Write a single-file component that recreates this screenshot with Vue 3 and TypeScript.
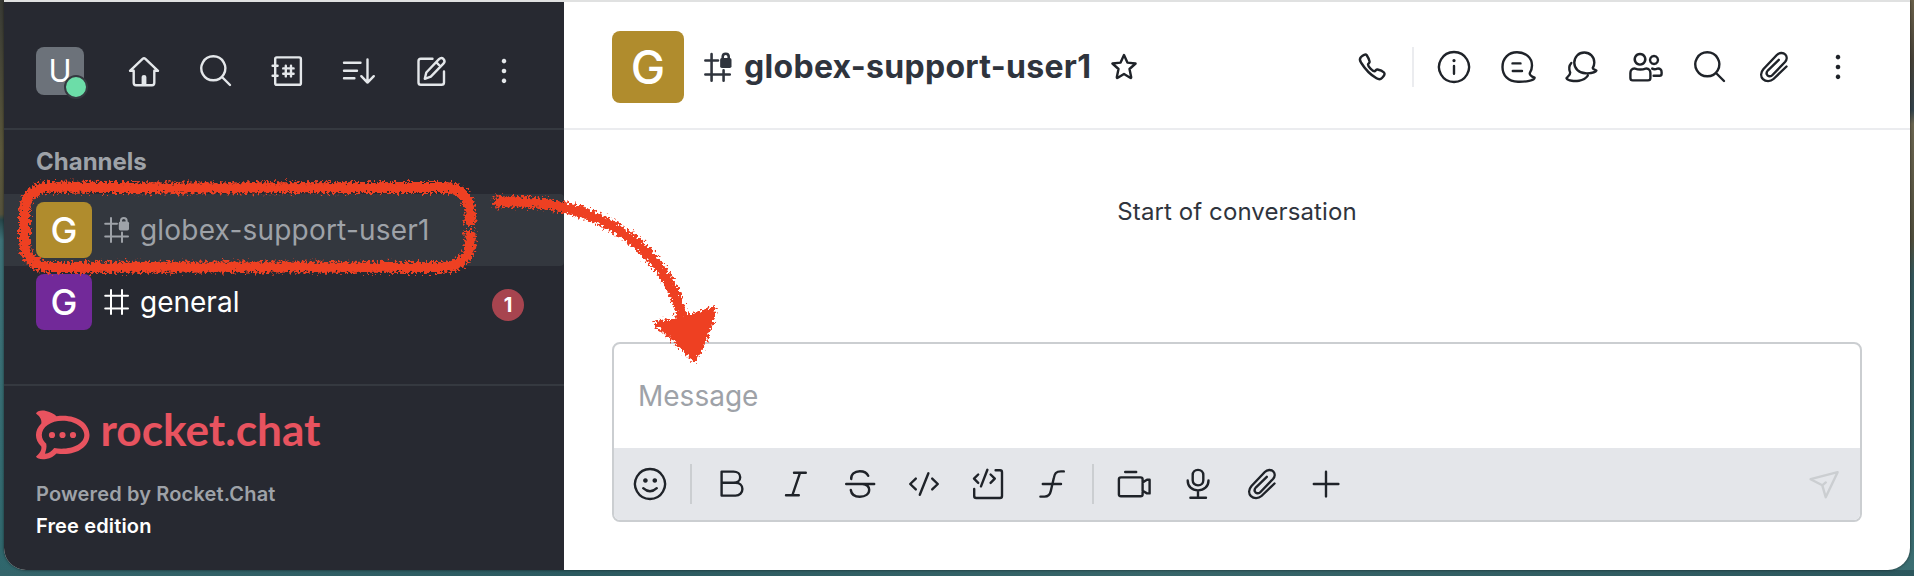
<script setup lang="ts">
interface IconShape {
  d: string
  fill?: string
}

const clip =
  'M32.5 19.5 L19.5 32 C16.3 35 11.6 34.7 9 32.2 C6.3 29.4 6.8 25.2 9.5 22 L22.8 8 C25.3 5.5 29.3 5.5 31.3 7.5 C33.3 9.7 33 12.8 31 15 L18.5 28 C17 29.6 14.8 29.6 13.5 28.3 C12.3 27 12.4 25 14 23.3 L24.8 12.8'
const search = 'M17.3 5.3 a12 12 0 1 0 .01 0Z M26 26 L34 34'
const dots =
  'M20 7.8 a2.3 2.3 0 1 0 .01 0Z M20 17.7 a2.3 2.3 0 1 0 .01 0Z M20 27.6 a2.3 2.3 0 1 0 .01 0Z'

const icons: Record<string, IconShape> = {
  home: {
    d: 'M18.6 7.8 Q20 6.6 21.4 7.8 L34 19.8 H30.3 V31.8 Q30.3 34.2 28 34.2 H12 Q9.7 34.2 9.7 31.8 V19.8 H6 Z',
    fill: 'M17.6 34 V26 Q17.6 24 20 24 Q22.4 24 22.4 26 V34Z',
  },
  search: { d: search },
  directory: {
    d: 'M8.7 6.4 H31.3 Q32.9 6.4 32.9 8 V32.2 Q32.9 33.8 31.3 33.8 H8.7 Q7.2 33.8 7.2 32.2 V8 Q7.2 6.4 8.7 6.4Z M4.6 14.8 H9.6 M4.6 24.8 H9.6 M15.2 17.4 H25.6 M15.2 22.8 H25.6 M17.8 14.8 V25.4 M23 14.8 V25.4',
  },
  sort: { d: 'M4 11.8 H20.5 M4 19.7 H17 M4 27.2 H14.4 M27.5 8.4 V31.5 M21.3 25.2 L27.5 31.6 L33.8 25.2' },
  edit: {
    d: 'M20.5 7.7 H8.8 Q6.5 7.7 6.5 10 V31.5 Q6.5 33.8 8.8 33.8 H29.5 Q32 33.8 32 31.5 V20.5 M12.8 27.8 L14.3 21.5 L27 8.2 C28.5 6.8 30.3 6.9 31.5 8 C32.7 9.3 32.8 11.2 31.4 12.7 L18.8 25.6 Z M24.2 11.2 L28.4 15.5',
  },
  menu: { d: '', fill: dots },
  phone: {
    d: 'M9 10 C11 8 13.6 6.8 14.6 8 C15.6 9.5 17.2 13 17.6 14.5 C18 16 16 16.5 16 17.6 C16 19.5 20.5 24.2 22.5 24.2 C23.6 24.2 24 22.2 25.5 22.5 C27 22.8 31 24.5 32 25.5 C33.2 26.8 32 29 30 31 C28.5 32.7 26.5 32.5 24.5 31.3 C18 27.5 13 22 9 15.5 C7.6 13.4 7.5 11.5 9 10Z',
  },
  info: {
    d: 'M20 5 a15 15 0 1 0 .01 0Z M20 19 V26.8',
    fill: 'M20 12 a1.6 1.6 0 1 0 .01 0Z',
  },
  thread: {
    d: 'M19 5.3 C27.5 5.3 34 10.5 34 18.5 C34 22 33 24 31.8 26 C31.4 28 34 29.6 36.6 30.7 C36.2 33.4 28 35 20 34.8 C10 34.5 4.5 28.5 4.5 20 C4.5 11 10.5 5.3 19 5.3Z M14.5 16.4 H22.5 M14.8 24 H24',
  },
  discussion: {
    d: 'M22.3 5.5 C28 5.5 32.3 9.8 32.3 15.5 C32.3 18 31.6 19.6 30.7 21.2 C30.6 22.2 33 22.8 34.4 23.6 C33.5 25.6 28 26.5 23.5 26.3 C17 26 12.3 21.5 12.3 15.7 C12.3 10 16.5 5.5 22.3 5.5Z M9.3 16 C6.6 19 6.8 22.2 8.2 25.6 C8.3 28 6 29 4.5 31.2 C6 34.1 13 34.4 17 33.7 C21 33 24 31.2 25.8 28.6',
  },
  members: {
    d: 'M14 7 a5.3 5.3 0 1 0 .01 0Z M28 9 a4 4 0 1 0 .01 0Z M9 21.6 Q14.3 23.4 19.6 21.6 C23 21.2 24.4 23.5 24.4 26 V31 Q24.4 33.4 22 33.4 H6.8 Q4.4 33.4 4.4 31 V26 C4.4 23.5 5.8 21.2 9 21.6Z M26.2 21.6 Q28.3 22.8 31.4 21.6 C34.2 21.3 35.6 23 35.6 25.2 V26.8 Q35.6 28.8 33.6 28.8 H27.6',
  },
  clip: { d: clip },
  star: {
    d: 'M20 8 L23.4 15.6 L31.6 16.5 L25.5 22 L27.2 30.2 Q27.2 31.4 26.2 30.8 L20 27 L13.8 30.8 Q12.8 31.4 12.8 30.2 L14.5 22 L8.4 16.5 L16.6 15.6Z',
  },
  emoji: {
    d: 'M20 5 a15 15 0 1 0 .01 0Z M13.2 24.2 Q20 30.4 26.8 24.2',
    fill: 'M15.4 14.2 a2.3 2.3 0 1 0 .01 0Z M24.8 14.2 a2.3 2.3 0 1 0 .01 0Z',
  },
  bold: {
    d: 'M9.6 7.6 H21.5 C25.5 7.6 28.2 10 28.2 13.2 C28.2 16.4 25.5 18.8 21.5 18.8 H9.6 M21.5 18.8 H23.5 C27.8 18.8 30.4 21.6 30.4 25 C30.4 28.5 27.8 31.6 23.5 31.6 H9.6 V7.6',
  },
  italic: { d: 'M18 8.8 H29.8 M10 31.2 H22.8 M24 8.8 L16.4 31.2' },
  strike: {
    d: 'M6.2 20 H34.2 M11.2 15 C10.8 10.5 14.5 7.2 19.8 7.2 C24.2 7.2 27 9 28.2 11.8 M10.8 26 C11.4 30.2 14.8 32.8 19.8 32.8 C25.4 32.8 29.2 30 29.2 25.8 C29.2 22.5 26.8 20.6 22.5 20',
  },
  code: { d: 'M11.8 14.6 L6.2 20 L11.8 25.4 M28.2 14.6 L33.8 20 L28.2 25.4 M24.4 9.3 L15.8 30.8' },
  multiline: {
    d: 'M10.2 10.5 L6 14.7 L10.2 18.9 M22.6 10.5 L26.8 14.7 L22.6 18.9 M19.4 5.8 L13 22.4 M27.6 6.2 H32 Q34 6.2 34 8.2 V32 Q34 34 32 34 H8.2 Q6.2 34 6.2 32 V25',
  },
  formula: { d: 'M31.8 7.4 H29 C24 7.4 22.6 9.5 21.8 14 L18.8 27 C18 31 16.5 32.6 12.5 32.6 H8.4 M10.8 20 H29' },
  video: {
    d: 'M7 13.4 H26.6 Q28.6 13.4 28.6 15.2 V30.4 Q28.6 32.2 26.6 32.2 H7 Q4.9 32.2 4.9 30.4 V15.2 Q4.9 13.4 7 13.4Z M11.2 8 H22.2 M28.6 18.4 L33 15.8 H35.6 V29.4 H33 L28.6 26.8',
  },
  mic: {
    d: 'M20 5.9 C23.2 5.9 25.3 8 25.3 11 V16.3 C25.3 19.3 23.2 21.4 20 21.4 C16.8 21.4 14.7 19.3 14.7 16.3 V11 C14.7 8 16.8 5.9 20 5.9Z M9.7 16.4 C9.7 22.6 14 26.4 20 26.4 C26 26.4 30.5 22.6 30.5 16.4 M20 26.4 V33.6 M12.4 33.8 H28',
  },
  plus: { d: 'M20 7.8 V32.4 M7.8 20 H32.4' },
  send: { d: 'M33.6 8.2 L6.6 15.2 L18.3 21.3 L21.7 33.2 Z M18.3 21.3 L21.8 18.4' },
}

const sidebarActions = ['home', 'search', 'directory', 'sort', 'edit', 'menu']
const roomActions = ['info', 'thread', 'discussion', 'members', 'search', 'clip', 'menu']
const formatActions = ['bold', 'italic', 'strike', 'code', 'multiline', 'formula']
const insertActions = ['video', 'mic', 'clip', 'plus']

const channels = [
  { name: 'globex-support-user1', tone: 'gold', locked: true, active: true, unread: 0 },
  { name: 'general', tone: 'purple', locked: false, active: false, unread: 1 },
]
</script>

<template>
  <div class="desktop">
    <div class="window">
      <aside class="sidebar">
        <header class="sidebar-top">
          <div class="user">U<span class="status"></span></div>
          <nav class="sidebar-actions">
            <svg v-for="name in sidebarActions" :key="name" class="icon" viewBox="0 0 40 40">
              <path class="line" :d="icons[name].d" />
              <path v-if="icons[name].fill" class="solid" :d="icons[name].fill" />
            </svg>
          </nav>
        </header>

        <section class="channels">
          <h2>Channels</h2>
          <div
            v-for="channel in channels"
            :key="channel.name"
            class="channel"
            :class="{ active: channel.active }"
          >
            <span class="avatar" :class="channel.tone">G</span>
            <svg class="hash" viewBox="0 0 26 28">
              <template v-if="channel.locked">
                <path class="line" d="M1.2 7.8 H13 M1.2 20.6 H24 M7 2 V26 M18 16.5 V26" />
                <path class="line" d="M17 7 V4.6 Q17 2 19.8 2 Q22.6 2 22.6 4.6 V7" />
                <rect class="solid" x="14.8" y="5.6" width="10.2" height="8.8" rx="1.6" />
              </template>
              <path v-else class="line" d="M1.2 7.8 H24 M1.2 20.6 H24 M7 2 V26 M18 2 V26" />
            </svg>
            <span class="name">{{ channel.name }}</span>
            <span v-if="channel.unread" class="badge">{{ channel.unread }}</span>
          </div>
        </section>

        <footer class="sidebar-foot">
          <svg class="brand" viewBox="0 0 288 50">
            <path
              class="brand-ring"
              fill-rule="evenodd"
              d="M0 3.5 C1 1 5 0 10 1 C15 2 18 4 20.5 6.2 C39 3.5 53.5 12.5 53.5 25 C53.5 37.5 39 46.4 20.5 43.5 C18 46 15 48.3 10 49 C5 49.6 1 48.8 0 46.5 C4 43 6 40 5.3 36.5 C-1.8 29.5 -1.8 20.5 5.3 13.5 C6 10 4 6.5 0 3.5Z M26.5 10.7 C14.5 10.7 5.8 17 5.8 25 C5.8 29 8 31.5 10.3 33.8 C11 37.5 9.8 40.5 9 43.8 C13 43.3 15.5 41.3 18.2 38 C33 40.7 48.3 35 48.3 25 C48.3 17 38.5 10.7 26.5 10.7Z"
            />
            <circle class="brand-ring" cx="16" cy="25" r="3.1" />
            <circle class="brand-ring" cx="26.5" cy="25" r="3.1" />
            <circle class="brand-ring" cx="37" cy="25" r="3.1" />
            <text class="brand-name" x="64.5" y="36" textLength="220" lengthAdjust="spacingAndGlyphs">rocket.chat</text>
          </svg>
          <p class="powered">Powered by Rocket.Chat</p>
          <p class="edition">Free edition</p>
        </footer>
      </aside>

      <main class="room">
        <header class="room-top">
          <span class="avatar large gold">G</span>
          <svg class="hash" viewBox="0 0 26 28">
            <path class="line" d="M1.2 8 H13 M1.2 21 H24 M7 2 V26.8 M18.2 17 V26.8" />
            <path class="line" d="M17.4 7 V4.4 Q17.4 1.6 20.2 1.6 Q23 1.6 23 4.4 V7" />
            <rect class="solid" x="15" y="5.6" width="10.6" height="9.4" rx="1.6" />
          </svg>
          <h1>globex-support-user1</h1>
          <svg class="icon star" viewBox="0 0 40 40"><path class="line" :d="icons.star.d" /></svg>
          <div class="room-actions">
            <svg class="icon" viewBox="0 0 40 40"><path class="line" :d="icons.phone.d" /></svg>
            <span class="rule"></span>
            <div class="icon-row">
              <svg v-for="name in roomActions" :key="name" class="icon" viewBox="0 0 40 40">
                <path class="line" :d="icons[name].d" />
                <path v-if="icons[name].fill" class="solid" :d="icons[name].fill" />
              </svg>
            </div>
          </div>
        </header>

        <div class="history"><p>Start of conversation</p></div>

        <section class="composer">
          <div class="input">Message</div>
          <div class="toolbar">
            <svg class="icon" viewBox="0 0 40 40">
              <path class="line" :d="icons.emoji.d" />
              <path class="solid" :d="icons.emoji.fill" />
            </svg>
            <span class="rule"></span>
            <div class="icon-row">
              <svg v-for="name in formatActions" :key="name" class="icon" viewBox="0 0 40 40">
                <path class="line" :d="icons[name].d" />
              </svg>
            </div>
            <span class="rule"></span>
            <div class="icon-row">
              <svg v-for="name in insertActions" :key="name" class="icon" viewBox="0 0 40 40">
                <path class="line" :d="icons[name].d" />
              </svg>
            </div>
            <svg class="icon send" viewBox="0 0 40 40"><path class="line" :d="icons.send.d" /></svg>
          </div>
        </section>
      </main>
    </div>

    <svg class="markup" viewBox="0 0 1914 576">
      <defs>
        <filter id="crayon" filterUnits="userSpaceOnUse" x="0" y="160" width="760" height="220">
          <feTurbulence type="fractalNoise" baseFrequency="0.4" numOctaves="2" seed="7" result="noise" />
          <feDisplacementMap in="SourceGraphic" in2="noise" scale="11" xChannelSelector="R" yChannelSelector="G" />
        </filter>
      </defs>
      <g filter="url(#crayon)">
        <path class="crayon" d="M470 226 V213 Q469 188 444 187.500 L180 188 L48 187 Q25 189 24.500 213 V243 Q26 266 50 267.500 L240 267 L442 267.500 Q468 266 470 244 V231" />
        <path class="crayon" d="M494 202 C545 200 582 208 616 228 C650 249 672 278 682 316" />
        <path class="crayon-head" d="M657 324 C678 321 700 314 713 310 L711 320 C706 336 700 348 694 359 C682 345 668 333 657 324Z" />
      </g>
    </svg>
  </div>
</template>

<style>
body {
  margin: 0;
}
</style>

<style scoped>
.desktop {
  position: relative;
  box-sizing: border-box;
  width: 1914px;
  height: 576px;
  padding: 0 4px 6px;
  overflow: hidden;
  background:
    linear-gradient(90deg, #35656b, #2b5a60 30%, #38666a 60%, #2c575d) 0 570px / 100% 6px no-repeat,
    linear-gradient(#383a35 0, #5b573b 150px, #55523c 214px, #27464a 220px, #3e7278 240px, #2f666c 100%) 0 0 / 20px 100% no-repeat,
    linear-gradient(#6a604a 0, #474238 60px, #34434c 110px, #6b6550 124px, #4f4d3c 240px, #34565a 275px, #3b6f73 100%) 100% 0 / 24px 100% no-repeat,
    #34656b;
  font-family: Inter, "Liberation Sans", sans-serif;
}

.window {
  display: flex;
  box-sizing: border-box;
  width: 1906px;
  height: 570px;
  border-top: 2px solid #e0e1e1;
  border-radius: 0 0 22px 22px;
  overflow: hidden;
  background: #fff;
  box-shadow: 0 0 3px rgba(0, 0, 0, 0.6);
}

.icon {
  display: block;
  flex: none;
  width: 40px;
  height: 40px;
}

.line {
  fill: none;
  stroke: currentColor;
  stroke-width: 2.4;
  stroke-linecap: round;
  stroke-linejoin: round;
}

.solid {
  fill: currentColor;
}

.sidebar {
  display: flex;
  flex: none;
  flex-direction: column;
  width: 560px;
  background: #272931;
}

.sidebar-top {
  display: flex;
  align-items: center;
  box-sizing: border-box;
  height: 128px;
  padding: 12px 40px 0 32px;
  border-bottom: 2px solid #353940;
}

.user {
  position: relative;
  flex: none;
  width: 48px;
  height: 48px;
  border-radius: 8px;
  background: #6c727a;
  color: #fff;
  font-size: 31px;
  line-height: 48px;
  text-align: center;
}

.status {
  position: absolute;
  right: -4px;
  bottom: -4px;
  width: 20px;
  height: 20px;
  border: 2px solid #353940;
  border-radius: 50%;
  background: #6cdda8;
}

.sidebar-actions {
  display: flex;
  gap: 32px;
  margin-left: 40px;
  color: #e4e7ea;
}

.channels {
  flex: 1;
}

h2 {
  margin: 0;
  height: 64px;
  padding-left: 32px;
  color: #9ea2a8;
  font-size: 24px;
  font-weight: 700;
  line-height: 64px;
}

.channel {
  display: flex;
  align-items: center;
  box-sizing: border-box;
  height: 72px;
  padding: 0 40px 0 32px;
  border-radius: 0 4px 4px 0;
  color: #fff;
  font-size: 28px;
}

.channel.active {
  background: #33373e;
  color: #9ea2a8;
}

.active .name {
  letter-spacing: 0.2px;
}

.avatar {
  flex: none;
  width: 56px;
  height: 56px;
  border-radius: 8px;
  color: #fff;
  font-size: 36px;
  font-weight: 500;
  line-height: 57px;
  text-align: center;
}

.avatar.gold {
  background: #b08c2d;
}

.avatar.purple {
  background: #722999;
}

.avatar.large {
  width: 72px;
  height: 72px;
  font-size: 46px;
  line-height: 72px;
}

.hash {
  flex: none;
  width: 26px;
  height: 28px;
  margin-left: 12px;
}

.channel .hash .line {
  stroke-width: 2;
}

.name {
  flex: 1;
  margin-left: 10px;
}

.badge {
  width: 32px;
  height: 32px;
  margin-top: 6px;
  border-radius: 50%;
  background: #a7444f;
  font-size: 20px;
  font-weight: 700;
  line-height: 32px;
  text-align: center;
}

.sidebar-foot {
  box-sizing: border-box;
  height: 186px;
  padding: 24px 32px 0;
  border-top: 2px solid #353940;
}

.brand {
  display: block;
  width: 288px;
  height: 50px;
  overflow: visible;
}

.brand-ring {
  fill: #e8535f;
}

.brand-name {
  fill: #e8535f;
  font-family: Lato, "Liberation Sans", sans-serif;
  font-size: 43px;
  font-weight: 700;
}

.sidebar-foot p {
  margin: 0;
  font-size: 20px;
  font-weight: 600;
  line-height: 32px;
  letter-spacing: 0.15px;
}

.sidebar-foot .powered {
  padding-top: 18px;
  color: #9ea2a8;
}

.edition {
  color: #fff;
}

.room {
  display: flex;
  flex: 1;
  flex-direction: column;
  min-width: 0;
}

.room-top {
  display: flex;
  align-items: center;
  box-sizing: border-box;
  height: 128px;
  padding: 0 52px 0 48px;
  border-bottom: 2px solid #ebecef;
  color: #1f2329;
}

.room-top .avatar,
.room-top .hash,
.room-top h1 {
  margin-top: 4px;
}

.room-top .hash {
  margin-left: 20px;
  width: 28px;
  height: 30px;
}

.room-top .hash,
h1 {
  color: #2f343d;
}

h1 {
  margin: 0 0 0 12px;
  font-size: 32px;
  font-weight: 700;
  line-height: 40px;
  letter-spacing: 0.3px;
}

.star {
  margin: 4px 0 0 13px;
}

.room-actions {
  display: flex;
  align-items: center;
  margin: 4px 0 0 auto;
}

.icon-row {
  display: flex;
  gap: 24px;
}

.rule {
  width: 2px;
  height: 40px;
}

.room-actions .rule {
  margin: 0 20px;
  background: #ebecef;
}

.history {
  flex: 1;
  padding-top: 64px;
  color: #2f343d;
  font-size: 24px;
  line-height: 36px;
  text-align: center;
  letter-spacing: 0.1px;
}

.history p {
  margin: 0;
}

.composer {
  display: flex;
  flex-direction: column;
  box-sizing: border-box;
  height: 180px;
  margin: 0 48px 48px;
  border: 2px solid #cbced1;
  border-radius: 8px;
  overflow: hidden;
  color: #1f2329;
}

.input {
  height: 104px;
  padding-left: 24px;
  color: #9ea2a8;
  font-size: 28px;
  line-height: 104px;
}

.toolbar {
  display: flex;
  flex: 1;
  align-items: center;
  padding: 0 16px;
  background: #e4e6ea;
}

.toolbar .rule {
  margin: 0 20px;
  background: #cbced1;
}

.send {
  margin-left: auto;
  color: #cbced1;
}

.markup {
  position: absolute;
  inset: 0;
  width: 1914px;
  height: 576px;
  pointer-events: none;
}

.crayon {
  fill: none;
  stroke: #ee4024;
  stroke-width: 11;
  stroke-linecap: butt;
}

.crayon-head {
  fill: #ee4024;
  stroke: #ee4024;
  stroke-width: 6;
  stroke-linejoin: round;
}
</style>
